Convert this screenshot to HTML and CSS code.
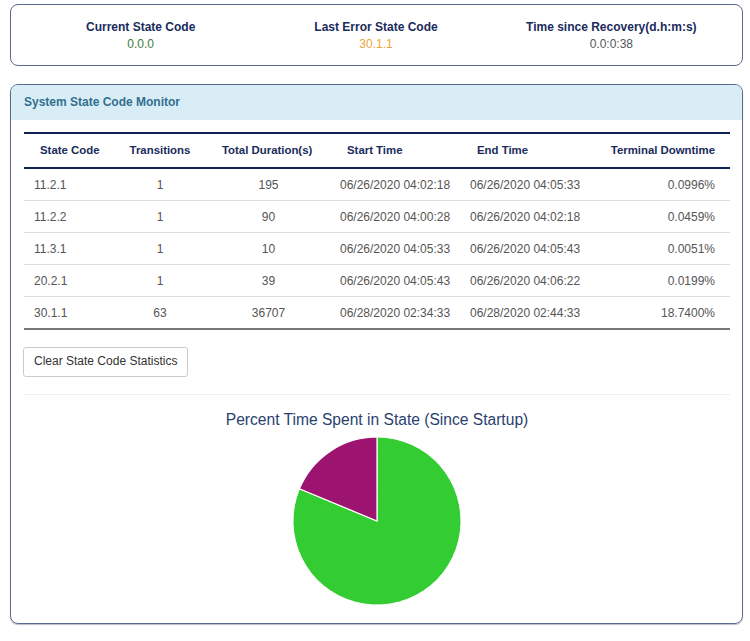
FILE: index.html
```html
<!DOCTYPE html>
<html>
<head>
<meta charset="utf-8">
<link rel="stylesheet" href="styles.css">
</head>
<body>
<div class="page">
  <div class="summary">
    <div class="stat">
      <div class="stat-label">Current State Code</div>
      <div class="stat-value ok">0.0.0</div>
    </div>
    <div class="stat">
      <div class="stat-label">Last Error State Code</div>
      <div class="stat-value warn">30.1.1</div>
    </div>
    <div class="stat">
      <div class="stat-label">Time since Recovery(d.h:m:s)</div>
      <div class="stat-value plain">0.0:0:38</div>
    </div>
  </div>

  <div class="panel">
    <div class="panel-heading">System State Code Monitor</div>
    <div class="panel-body">
      <table class="codes">
        <colgroup>
          <col class="c1"><col class="c2"><col class="c3"><col class="c4"><col class="c5"><col class="c6">
        </colgroup>
        <thead>
          <tr>
            <th class="h-code">State Code</th>
            <th class="h-center">Transitions</th>
            <th class="h-left">Total Duration(s)</th>
            <th class="h-left">Start Time</th>
            <th class="h-left">End Time</th>
            <th class="h-right">Terminal Downtime</th>
          </tr>
        </thead>
        <tbody>
          <tr><td class="d-code">11.2.1</td><td class="d-center">1</td><td class="d-center">195</td><td class="d-time">06/26/2020 04:02:18</td><td class="d-time">06/26/2020 04:05:33</td><td class="d-right">0.0996%</td></tr>
          <tr><td class="d-code">11.2.2</td><td class="d-center">1</td><td class="d-center">90</td><td class="d-time">06/26/2020 04:00:28</td><td class="d-time">06/26/2020 04:02:18</td><td class="d-right">0.0459%</td></tr>
          <tr><td class="d-code">11.3.1</td><td class="d-center">1</td><td class="d-center">10</td><td class="d-time">06/26/2020 04:05:33</td><td class="d-time">06/26/2020 04:05:43</td><td class="d-right">0.0051%</td></tr>
          <tr><td class="d-code">20.2.1</td><td class="d-center">1</td><td class="d-center">39</td><td class="d-time">06/26/2020 04:05:43</td><td class="d-time">06/26/2020 04:06:22</td><td class="d-right">0.0199%</td></tr>
          <tr><td class="d-code">30.1.1</td><td class="d-center">63</td><td class="d-center">36707</td><td class="d-time">06/28/2020 02:34:33</td><td class="d-time">06/28/2020 02:44:33</td><td class="d-right">18.7400%</td></tr>
        </tbody>
      </table>

      <button class="btn">Clear State Code Statistics</button>
      <hr class="divider">

      <div class="chart">
        <div class="chart-title">Percent Time Spent in State (Since Startup)</div>
        <svg class="pie" width="170" height="170" viewBox="0 0 170 170">
          <path d="M85,85 L85,1 A84,84 0 1,1 7.42,52.8 Z" fill="#33cc33" stroke="#ffffff" stroke-width="1"/>
          <path d="M85,85 L85,1 A84,84 0 0,0 7.42,52.8 Z" fill="#9c1470" stroke="#ffffff" stroke-width="1.2"/>
        </svg>
      </div>
    </div>
  </div>
</div>
</body>
</html>
```

FILE: styles.css
```css
html, body {
  margin: 0;
  padding: 0;
  background: #ffffff;
}
body {
  font-family: "Liberation Sans", Arial, sans-serif;
  font-size: 12px;
  line-height: 17px;
  color: #555555;
}
.page {
  padding: 4px 7px 16px 10px;
}
.summary {
  border: 1px solid #5b6890;
  border-radius: 8px;
  padding: 14px 13px 12px 12px;
  display: grid;
  grid-template-columns: repeat(3, 1fr);
  text-align: center;
}
.stat-label {
  font-weight: bold;
  color: #1a2b5c;
}
.stat-value.ok { color: #3c7a3d; }
.stat-value.warn { color: #eea23e; }
.stat-value.plain { color: #555555; }

.panel {
  margin-top: 18px;
  border: 1px solid #5b6890;
  border-radius: 8px;
  overflow: hidden;
  box-shadow: 0 1px 1px rgba(60, 70, 100, 0.35);
}
.panel-heading {
  background: #d9edf7;
  color: #31708f;
  font-weight: bold;
  height: 35px;
  line-height: 34px;
  padding: 0 13px;
}
.panel-body {
  padding: 12px 12px 17px 13px;
}
.codes {
  width: 100%;
  border-collapse: collapse;
  table-layout: fixed;
}
.c1 { width: 90px; }
.c2 { width: 92px; }
.c3 { width: 125px; }
.c4 { width: 130px; }
.c5 { width: 130px; }
.c6 { width: auto; }
.codes th {
  color: #1a2b5c;
  font-weight: bold;
  font-size: 11.4px;
  padding: 8px 0;
  border-top: 2px solid #0f2150;
  border-bottom: 2px solid #0f2150;
  white-space: nowrap;
}
.h-code { text-align: left; padding-left: 16px !important; }
.h-center { text-align: center; }
.h-left { text-align: left; padding-left: 16px !important; }
.h-right { text-align: right; padding-right: 15px !important; }
.codes td {
  padding: 8px 0 7px;
  line-height: 16px;
  color: #555555;
  border-top: 1px solid #dddddd;
  white-space: nowrap;
}
.codes tbody tr:first-child td { border-top: none; }
.codes tbody tr:last-child td { border-bottom: 2px solid #777777; }
.d-code { text-align: left; padding-left: 10px !important; }
.d-center { text-align: center; }
.d-time { text-align: left; padding-left: 9px !important; }
.d-right { text-align: right; padding-right: 15px !important; }

.btn {
  display: block;
  margin: 17px 0 0 -1px;
  font-family: "Liberation Sans", Arial, sans-serif;
  font-size: 12px;
  line-height: 17px;
  color: #333333;
  background: #ffffff;
  border: 1px solid #cccccc;
  border-radius: 3px;
  padding: 5px 10px 6px;
}
.divider {
  margin: 17px 0 0 0;
  border: 0;
  border-top: 1px solid #eeeeee;
  height: 0;
}
.chart {
  display: flex;
  flex-direction: column;
  align-items: center;
  padding-top: 16px;
}
.chart-title {
  font-size: 15.6px;
  line-height: 18px;
  color: #2a3f6f;
}
.pie {
  display: block;
  margin-top: 7px;
}
```
